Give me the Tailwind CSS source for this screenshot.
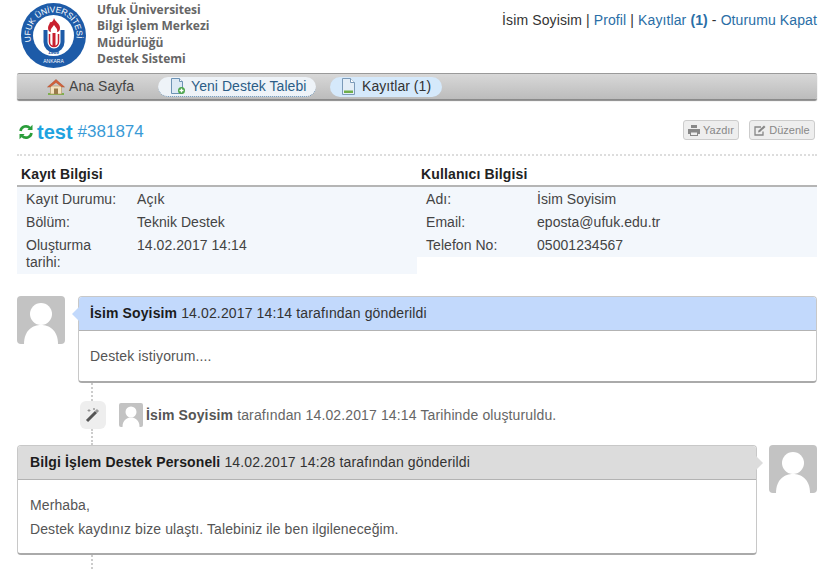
<!DOCTYPE html>
<html lang="tr">
<head>
    <meta charset="UTF-8">
    <meta name="viewport" content="width=device-width, initial-scale=1.0">
    <script src="https://cdn.jsdelivr.net/npm/@tailwindcss/browser@4"></script>
    <title>Destek Sistemi</title>
</head>
<body class="bg-white h-[569px] overflow-hidden font-['Liberation_Sans',Arial,sans-serif] text-[14px] tracking-[0.13px] text-[#444]">
<div class="w-[800px] ml-[17px]">

    <!-- ust kisim -->
    <div class="h-[73px] flex justify-between">
        <div class="flex">
            <svg class="mt-[3px] ml-[4px]" width="65" height="65" viewBox="0 0 65 65">
                <defs><path id="arcTop" d="M10.300 38.500 A23 23 0 1 1 55.400 34.500"/></defs>
                <circle cx="32.500" cy="32.500" r="32.500" fill="#1d5ba8"/>
                <circle cx="32.500" cy="32.500" r="20.500" fill="#fff"/>
                <text font-size="8.400" fill="#fff" font-family="'Liberation Sans',sans-serif"><textPath href="#arcTop" textLength="81" lengthAdjust="spacing">UFUK ÜNİVERSİTESİ</textPath></text>
                <path d="M24.500 27 v12 a8.500 8.500 0 0 0 17 0 v-12" fill="none" stroke="#1d5ba8" stroke-width="4"/>
                <path d="M28.500 31 v8 a4.500 4.500 0 0 0 9 0 v-8" fill="none" stroke="#c8202f" stroke-width="1.500"/>
                <path d="M31.500 30 h3 v13 h-3z" fill="#c8202f"/>
                <path d="M33 15 c1 4 6 5 6 10 c0 3 -2 4 -3 4 c1 -3 -1 -4 -3 -7 c-2 3 -4 4 -3 7 c-1 0 -3 -1 -3 -4 c0 -3 2 -4 2 -6 c1 1 3 0 4 -4z" fill="#c8202f"/>
                <text x="32.500" y="50.500" text-anchor="middle" font-size="5" font-weight="700" letter-spacing="0" fill="#1d5ba8" font-family="'Liberation Sans',sans-serif">1989</text>
                <text x="32.500" y="60" text-anchor="middle" font-size="5" letter-spacing="0" fill="#fff" font-family="'Liberation Sans',sans-serif">ANKARA</text>
            </svg>
            <div class="ml-[11px] font-['Open_Sans',sans-serif] font-bold text-[12px] tracking-normal leading-[16.3px] text-[#666] pt-[2px]">
                <div>Ufuk Üniversitesi</div>
                <div>Bilgi İşlem Merkezi</div>
                <div>Müdürlüğü</div>
                <div>Destek Sistemi</div>
            </div>
        </div>
        <div class="pt-[10px] text-[14px] tracking-[0.11px] text-[#333] whitespace-nowrap">
            İsim Soyisim | <a class="text-[#2a6ea6]" href="#">Profil</a> | <a class="text-[#2a6ea6]" href="#">Kayıtlar <b>(1)</b></a> - <a class="text-[#2a6ea6]" href="#">Oturumu Kapat</a>
        </div>
    </div>

    <!-- menu -->
    <div class="h-[26px] flex items-center border-t border-[#9a9a9a] bg-gradient-to-b from-[#d8d8d8] to-[#bcbcbc] shadow-[0_2px_1px_#8a8a8a] rounded-[2px] tracking-[0.05px]">
        <a href="#" class="ml-[30px] flex items-center gap-[4px] text-[#444]">
            <svg width="18" height="17" viewBox="0 0 18 17"><path d="M1 15 h16 v2 H1z" fill="#7fae4e"/><path d="M3.500 8 h11 v8 h-11z" fill="#f4e3c0" stroke="#b79a6a" stroke-width=".7"/><path d="M7 10.500 h4 v5.500 H7z" fill="#9a7a4a"/><path d="M0.500 9 L9 1.500 L17.500 9 L15 9 L9 4.500 L3 9z" fill="#d4603a" stroke="#a8502e" stroke-width=".5"/></svg>
            Ana Sayfa
        </a>
        <a href="#" class="ml-[24px] h-[20px] w-[158px] flex items-center gap-[5px] pl-[11px] rounded-full bg-[#eef3f8] text-[#2b5d87] border-b border-dotted border-[#5a86ad]">
            <svg width="17" height="17" viewBox="0 0 17 17"><path d="M2.500 .5 h8 l3 3 v12 h-11z" fill="#dce9f5" stroke="#6d93b5"/><path d="M10.500 .5 v3 h3" fill="#fff" stroke="#6d93b5"/><circle cx="12.500" cy="12.500" r="3.500" fill="#4ca64c"/><path d="M12.500 10.500 v4 M10.500 12.500 h4" stroke="#fff" stroke-width="1.300"/></svg>
            Yeni Destek Talebi
        </a>
        <a href="#" class="ml-[14px] h-[20px] w-[112px] flex items-center gap-[6px] pl-[11px] rounded-full bg-[#d5e9fb] text-[#333]">
            <svg width="15" height="17" viewBox="0 0 15 17"><path d="M1.500 .5 h8 l4 4 v12 h-12z" fill="#e4eef7" stroke="#7b9ab8"/><path d="M9.500 .5 v4 h4" fill="#fff" stroke="#7b9ab8"/><path d="M3 12.500 h9 v2.500 h-9z" fill="#6fae4a"/></svg>
            Kayıtlar (1)
        </a>
    </div>

    <!-- baslik -->
    <div class="mt-[19px] h-[38px] pb-[12px] flex justify-between items-center border-b-2 border-dotted border-[#ddd]">
        <div class="flex items-center pl-[1px] pt-[3px]">
            <svg width="16" height="16" viewBox="0 0 16 16" class="mt-[1px]" fill="none" stroke="#2a9d3a" stroke-width="2.600"><path d="M2.500 7 A5.500 5.500 0 0 1 12 4.200"/><path d="M13.500 9 A5.500 5.500 0 0 1 4 11.800"/><path d="M14.500 .8 v5.200 h-5.200z" fill="#2a9d3a" stroke="none"/><path d="M1.500 15.200 v-5.200 h5.200z" fill="#2a9d3a" stroke="none"/></svg>
            <span class="ml-[3px] text-[20px] font-bold text-[#1fa3e0] tracking-normal">test</span>
            <span class="ml-[5px] text-[17px] text-[#3a9ad6] tracking-normal">#381874</span>
        </div>
        <div class="flex gap-[10px] pr-[2px]">
            <button class="h-[20px] w-[56px] flex items-center justify-center gap-[3px] rounded-[3px] border border-[#ccc] bg-[#eee] text-[11px] tracking-normal text-[#888]">
                <svg width="12" height="11" viewBox="0 0 12 11" fill="#888"><path d="M3 0 h6 v3 h-6z M0 4 h12 v5 h-2 v2 h-8 v-2 h-2z M3 7.500 v2.500 h6 v-2.500z" fill-rule="evenodd"/></svg>
                Yazdır
            </button>
            <button class="h-[20px] w-[66px] flex items-center justify-center gap-[3px] rounded-[3px] border border-[#ccc] bg-[#eee] text-[11px] tracking-normal text-[#888]">
                <svg width="12" height="11" viewBox="0 0 12 11" fill="none" stroke="#888" stroke-width="1.300"><path d="M9 6.500 v3.500 h-8 v-8 h6"/><path d="M4 7.500 l.5 -2 L10 .5 l1.500 1.500 L6 7z" fill="#888" stroke="none"/></svg>
                Düzenle
            </button>
        </div>
    </div>

    <!-- bilgi tablolari -->
    <div class="mt-[9px] flex">
        <div class="w-[400px]">
            <div class="h-[22px] pl-[4px] font-bold text-[14px] leading-[19px] text-[#222] border-b-[2px] border-[#b5b5b5]">Kayıt Bilgisi</div>
            <div class="bg-[#f3f7fc] h-[87px] pl-[9px] text-[#444] leading-[16px] tracking-[0.05px]">
                <div class="flex h-[23px] items-center"><span class="w-[111px]">Kayıt Durumu:</span><span>Açık</span></div>
                <div class="flex h-[23px] items-center"><span class="w-[111px]">Bölüm:</span><span>Teknik Destek</span></div>
                <div class="flex pt-[4px]"><span class="w-[111px] leading-[17px]">Oluşturma<br>tarihi:</span><span class="leading-[17px]">14.02.2017 14:14</span></div>
            </div>
        </div>
        <div class="w-[400px]">
            <div class="h-[22px] pl-[4px] font-bold text-[14px] leading-[19px] text-[#222] border-b-[2px] border-[#b5b5b5]">Kullanıcı Bilgisi</div>
            <div class="bg-[#f3f7fc] h-[70px] pl-[9px] pt-[1px] text-[#444] tracking-[0.05px]">
                <div class="flex h-[23px] items-center"><span class="w-[111px]">Adı:</span><span>İsim Soyisim</span></div>
                <div class="flex h-[23px] items-center"><span class="w-[111px]">Email:</span><span>eposta@ufuk.edu.tr</span></div>
                <div class="flex h-[23px] items-center"><span class="w-[111px]">Telefon No:</span><span>05001234567</span></div>
            </div>
        </div>
    </div>

    <!-- mesaj 1 -->
    <div class="mt-[22px] flex">
        <div class="w-[48px] h-[48px] rounded-[4px] bg-[#c3c3c3] overflow-hidden shrink-0">
            <svg width="48" height="48" viewBox="0 0 48 48" fill="#fff"><circle cx="24" cy="18" r="11"/><path d="M7 48 C7 34 16 29 24 29 C32 29 41 34 41 48z"/></svg>
        </div>
        <div class="relative ml-[13px] w-[739px] h-[87px] rounded-[4px] border border-[#c8c8c8] border-b-2 border-b-[#aaa]">
            <div class="absolute left-[-7px] top-[10px] w-0 h-0 border-y-[7px] border-y-transparent border-r-[7px] border-r-[#c2d9fc]"></div>
            <div class="h-[34px] px-[11px] flex items-center bg-[#c2d9fc] border-b border-[#b3b3b3] rounded-t-[3px] text-[#333]"><b class="text-[#1c1c1c]">İsim Soyisim</b>&nbsp;14.02.2017 14:14 tarafından gönderildi</div>
            <div class="pt-[15px] pl-[11px] text-[#555]">Destek istiyorum....</div>
        </div>
    </div>

    <!-- olay satiri -->
    <div class="ml-[74px] h-[18px] border-l-2 border-dotted border-[#ccc]"></div>
    <div class="flex items-center h-[28px]">
        <div class="ml-[63px] w-[26px] h-[28px] rounded-[6px] bg-[#eee] flex items-center justify-center">
            <svg width="16" height="16" viewBox="0 0 16 16"><path d="M2 14 L11 5" stroke="#555" stroke-width="3"/><path d="M11 5 L13 3" stroke="#999" stroke-width="3"/><path d="M4 2 v3 M2.500 3.500 h3 M9 1 v2 M8 2 h2" stroke="#888" stroke-width=".8"/></svg>
        </div>
        <div class="ml-[13px] w-[24px] h-[24px] rounded-[2px] bg-[#c3c3c3] overflow-hidden shrink-0">
            <svg width="24" height="24" viewBox="0 0 48 48" fill="#fff"><circle cx="24" cy="18" r="11"/><path d="M7 48 C7 34 16 29 24 29 C32 29 41 34 41 48z"/></svg>
        </div>
        <div class="ml-[3px] text-[#666]"><b class="text-[#555]">İsim Soyisim</b> tarafından 14.02.2017 14:14 Tarihinde oluşturuldu.</div>
    </div>
    <div class="ml-[74px] h-[16px] border-l-2 border-dotted border-[#ccc]"></div>

    <!-- mesaj 2 -->
    <div class="flex">
        <div class="relative w-[740px] h-[110px] rounded-[4px] border border-[#c8c8c8] border-b-2 border-b-[#aaa]">
            <div class="absolute right-[-7px] top-[10px] w-0 h-0 border-y-[7px] border-y-transparent border-l-[7px] border-l-[#dcdcdc]"></div>
            <div class="h-[34px] px-[12px] flex items-center bg-[#dcdcdc] border-b border-[#b3b3b3] rounded-t-[3px] text-[#333]"><b class="text-[#1c1c1c]">Bilgi İşlem Destek Personeli</b>&nbsp;14.02.2017 14:28 tarafından gönderildi</div>
            <div class="pt-[13px] pl-[12px] text-[#555] leading-[24px] tracking-[0.1px]">
                <p>Merhaba,</p>
                <p>Destek kaydınız bize ulaştı. Talebiniz ile ben ilgileneceğim.</p>
            </div>
        </div>
        <div class="ml-[12px] w-[48px] h-[48px] rounded-[4px] bg-[#c3c3c3] overflow-hidden shrink-0">
            <svg width="48" height="48" viewBox="0 0 48 48" fill="#fff"><circle cx="24" cy="18" r="11"/><path d="M7 48 C7 34 16 29 24 29 C32 29 41 34 41 48z"/></svg>
        </div>
    </div>
    <div class="ml-[74px] h-[14px] border-l-2 border-dotted border-[#ccc]"></div>
</div>
</body>
</html>
